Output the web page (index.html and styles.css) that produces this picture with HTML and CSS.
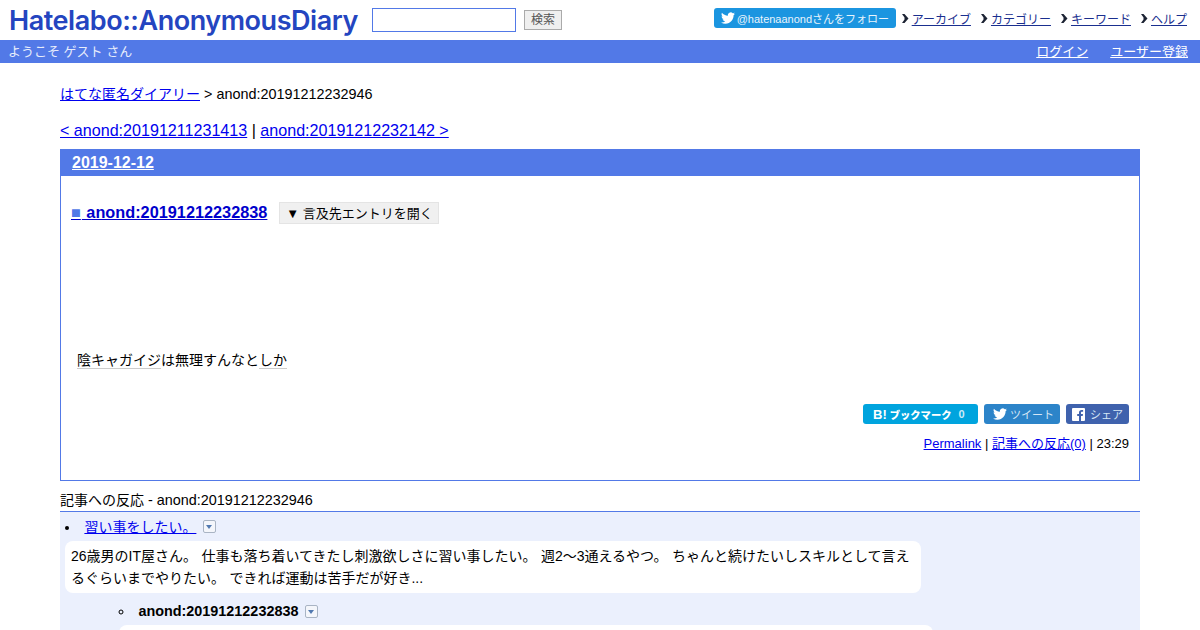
FILE: index.html
```html
<!DOCTYPE html>
<html lang="ja">
<head>
<meta charset="utf-8">
<title>anond:20191212232946</title>
<link rel="stylesheet" href="styles.css">
</head>
<body>
<header class="top">
  <div class="top-left">
    <a class="logo" href="#">Hatelabo::AnonymousDiary</a>
    <form class="search">
      <input class="search-input" type="text">
      <button class="search-btn" type="button">検索</button>
    </form>
  </div>
  <nav class="top-nav">
    <a class="tw-follow" href="#">
      <svg class="tw-icon" viewBox="0 0 24 24"><path d="M23.95 4.57a10 10 0 0 1-2.82.77 4.96 4.96 0 0 0 2.16-2.72c-.95.55-2 .95-3.12 1.18a4.92 4.92 0 0 0-8.38 4.48C7.69 8.1 4.07 6.13 1.64 3.16a4.82 4.82 0 0 0-.67 2.48c0 1.71.87 3.21 2.19 4.1a4.9 4.9 0 0 1-2.23-.62v.06a4.92 4.92 0 0 0 3.95 4.83 5 5 0 0 1-2.21.08 4.94 4.94 0 0 0 4.6 3.42A9.87 9.87 0 0 1 0 19.54a14 14 0 0 0 7.56 2.21c9.05 0 14-7.5 14-13.98 0-.21 0-.42-.02-.63a9.94 9.94 0 0 0 2.41-2.57z"/></svg>
      <span>@hatenaanondさんをフォロー</span>
    </a>
    <a class="nav-link" href="#"><svg class="nav-mark" viewBox="0 0 7 9"><path d="M0 0h2.500l4 4.500-4 4.500H0l2.500-3.500v-2z"/></svg><span class="nav-text">アーカイブ</span></a>
    <a class="nav-link" href="#"><svg class="nav-mark" viewBox="0 0 7 9"><path d="M0 0h2.500l4 4.500-4 4.500H0l2.500-3.500v-2z"/></svg><span class="nav-text">カテゴリー</span></a>
    <a class="nav-link" href="#"><svg class="nav-mark" viewBox="0 0 7 9"><path d="M0 0h2.500l4 4.500-4 4.500H0l2.500-3.500v-2z"/></svg><span class="nav-text">キーワード</span></a>
    <a class="nav-link" href="#"><svg class="nav-mark" viewBox="0 0 7 9"><path d="M0 0h2.500l4 4.500-4 4.500H0l2.500-3.500v-2z"/></svg><span class="nav-text">ヘルプ</span></a>
  </nav>
</header>
<div class="userbar">
  <span>ようこそ ゲスト さん</span>
  <div class="userbar-links"><a href="#">ログイン</a><a href="#">ユーザー登録</a></div>
</div>
<main class="content">
  <p class="crumb"><a class="ja" href="#">はてな匿名ダイアリー</a> &gt; anond:20191212232946</p>
  <p class="pager"><a href="#">&lt; anond:20191211231413</a> | <a href="#">anond:20191212232142 &gt;</a></p>
  <section class="day">
    <h2 class="day-head"><a href="#">2019-12-12</a></h2>
    <div class="day-body">
      <div class="entry-title">
        <h3><a href="#"><span class="square">■</span> anond:20191212232838</a></h3>
        <button class="refer-btn" type="button">▼ 言及先エントリを開く</button>
      </div>
      <p class="entry-text ja"><a class="kw" href="#">陰キャガイジ</a>は無理すんなと<a class="kw" href="#">しか</a></p>
      <div class="share">
        <a class="sbtn sbtn-hb" href="#"><b class="hb-b">B!</b><b class="hb-t">ブックマーク</b><b class="hb-n">0</b></a>
        <a class="sbtn sbtn-tw" href="#"><svg class="tw-icon" viewBox="0 0 24 24"><path d="M23.95 4.57a10 10 0 0 1-2.82.77 4.96 4.96 0 0 0 2.16-2.72c-.95.55-2 .95-3.12 1.18a4.92 4.92 0 0 0-8.38 4.48C7.69 8.1 4.07 6.13 1.64 3.16a4.82 4.82 0 0 0-.67 2.48c0 1.71.87 3.21 2.19 4.1a4.9 4.9 0 0 1-2.23-.62v.06a4.92 4.92 0 0 0 3.95 4.83 5 5 0 0 1-2.21.08 4.94 4.94 0 0 0 4.6 3.42A9.87 9.87 0 0 1 0 19.54a14 14 0 0 0 7.56 2.21c9.05 0 14-7.5 14-13.98 0-.21 0-.42-.02-.63a9.94 9.94 0 0 0 2.41-2.57z"/></svg><span>ツイート</span></a>
        <a class="sbtn sbtn-fb" href="#"><svg class="fb-icon" viewBox="0 0 13 13"><path d="M1 0h11a1 1 0 0 1 1 1v11a1 1 0 0 1-1 1H9V8h1.700l.3-2H9V4.800c0-.6.3-1 1-1h1.100V2c-.4 0-.9-.1-1.500-.1C8 1.900 7 2.900 7 4.500V6H5.200v2H7v5H1a1 1 0 0 1-1-1V1a1 1 0 0 1 1-1z"/></svg><span>シェア</span></a>
      </div>
      <p class="permalink"><a href="#">Permalink</a> | <a href="#">記事への反応(0)</a> | 23:29</p>
    </div>
  </section>
  <h4 class="refs-head"><span class="ja">記事への反応</span> - anond:20191212232946</h4>
  <div class="refs">
    <ul class="refs-list">
      <li>
        <div class="ref-title"><a class="ja" href="#">習い事をしたい。</a><span class="toggle"></span></div>
        <p class="card">26歳男のIT屋さん。 仕事も落ち着いてきたし刺激欲しさに習い事したい。 週2〜3通えるやつ。 ちゃんと続けたいしスキルとして言えるぐらいまでやりたい。 できれば運動は苦手だが好き...</p>
        <ul class="refs-sub">
          <li>
            <div class="ref-title"><b>anond:20191212232838</b><span class="toggle"></span></div>
            <p class="card card-sub"></p>
          </li>
        </ul>
      </li>
    </ul>
  </div>
</main>
</body>
</html>
```
FILE: styles.css
```css
html, body { margin: 0; padding: 0; height: 630px; overflow: hidden; }
body { background: #fff; color: #000; font-family: "Liberation Sans", "Noto Sans CJK JP", sans-serif; font-size: 14.4px; }
a { color: #0000ee; }
p, h2, h3, h4, ul { margin: 0; padding: 0; }
.ja { font-size: 14px; }

.top { height: 40px; display: flex; justify-content: space-between; }
.top-left { display: flex; align-items: flex-start; padding-left: 9px; }
.logo { width: 350px; margin-right: 13px; font-family: "Inter", sans-serif; font-weight: 600; font-size: 27px; letter-spacing: -0.45px; line-height: 42px; color: #2445c0; text-decoration: none; white-space: nowrap; }
.search { display: flex; align-items: flex-start; gap: 8px; padding-top: 8px; }
.search-input { box-sizing: border-box; width: 144px; height: 24px; margin: 0; border: 1px solid #5279e7; background: #fff; }
.search-btn { box-sizing: border-box; width: 38px; height: 20px; margin-top: 2px; padding: 0; border: 1px solid #aaa; background: #efefef; color: #555; font-family: inherit; font-size: 12px; line-height: 18px; }
.top-nav { display: flex; align-items: flex-start; padding: 8px 13px 0 0; font-size: 12px; }
.tw-follow { box-sizing: border-box; width: 182px; height: 20px; display: flex; align-items: center; padding-left: 7px; background: #1b95e0; border-radius: 3px; color: #e8f4fc; font-size: 11px; text-decoration: none; margin-right: 6px; }
.tw-icon { width: 14px; height: 14px; fill: #fff; margin-right: 2px; flex: none; }
.nav-link { display: flex; align-items: center; height: 20px; color: #1a2f8f; margin-right: 10px; text-decoration: none; }
.nav-link:last-child { margin-right: 0; }
.nav-mark { width: 7px; height: 9px; margin-right: 3px; flex: none; fill: #1c2333; }
.nav-text { text-decoration: underline; }

.userbar { height: 21px; padding: 0 12px 2px 8px; display: flex; justify-content: space-between; align-items: center; background: #5279e7; color: #e6ecfb; font-size: 13px; }
.userbar-links { display: flex; gap: 22px; }
.userbar-links a { color: #fff; }

.content { padding: 0 60px; }
.crumb { margin-top: 22px; line-height: 18px; }
.pager { margin-top: 17px; font-size: 16.1px; line-height: 20px; }
.day { margin-top: 9px; border: 1px solid #5279e7; height: 332px; box-sizing: border-box; }
.day-head { height: 26px; padding-left: 11px; background: #5279e7; font-size: 16px; line-height: 26px; }
.day-head a { color: #fff; }
.day-body { padding: 0 10px; }
.entry-title { display: flex; align-items: center; margin-top: 26px; height: 22px; }
.entry-title h3 { font-size: 16.3px; font-weight: 700; margin-right: 12px; padding-bottom: 2px; }
.entry-title a { color: #0000cc; }
.square { color: #5279e7; margin-right: 1px; }
.refer-btn { height: 22px; width: 160px; padding: 0 0 1px; border: 1px solid #e4e4e4; background: #f0f0f0; font-family: inherit; font-size: 13px; color: #000; }
.entry-text { margin: 125px 0 0 6px; line-height: 22px; }
.kw { color: #000; text-decoration: none; border-bottom: 1px solid #ccc; }
.share { display: flex; justify-content: flex-end; gap: 6px; margin-top: 33px; }
.sbtn { box-sizing: border-box; height: 20px; display: flex; align-items: center; border-radius: 3px; color: #d5e6f5; font-size: 11px; text-decoration: none; }
.sbtn-hb { width: 115px; background: #00a4de; color: #fff; padding-left: 10px; font-size: 11px; }
.hb-b { font-size: 13px; }
.hb-t { font-size: 10.3px; font-weight: 900; margin-left: 3px; }
.hb-n { margin-left: 7px; color: #cdeaf6; }
.sbtn-tw { width: 76px; background: #2c84c9; padding-left: 9px; }
.sbtn-tw .tw-icon { margin-right: 3px; }
.sbtn-fb { width: 63px; background: #3f62ad; padding-left: 6px; }
.fb-icon { width: 13px; height: 13px; fill: #fff; margin-right: 5px; }
.permalink { margin-top: 10px; text-align: right; font-size: 13px; line-height: 20px; }
.refs-head { margin-top: 11px; height: 19px; font-size: 14.4px; font-weight: 400; line-height: 17px; border-bottom: 1px solid #5279e7; }
.refs { background: #ebf0fd; height: 200px; padding: 4px 0 0 5px; }
.refs-list { list-style: disc inside; }
.ref-title { display: inline-flex; align-items: center; gap: 7px; }
.toggle { position: relative; display: inline-block; width: 11px; height: 11px; border: 1px solid #a9b4c4; background: #f4f6fb; border-radius: 2px; }
.toggle::after { content: ""; position: absolute; left: 2px; top: 4px; border: 3.500px solid transparent; border-top: 4px solid #5279b0; border-bottom: 0; }
.card { box-sizing: border-box; width: 856px; margin-top: 5px; padding: 4px 6px; background: #fff; border-radius: 8px; font-size: 14px; word-spacing: 0.5px; line-height: 22px; }
.refs-sub { list-style: circle inside; margin: 10px 0 0 54px; }
.card-sub { width: 814px; height: 60px; margin-top: 6px; }
```
